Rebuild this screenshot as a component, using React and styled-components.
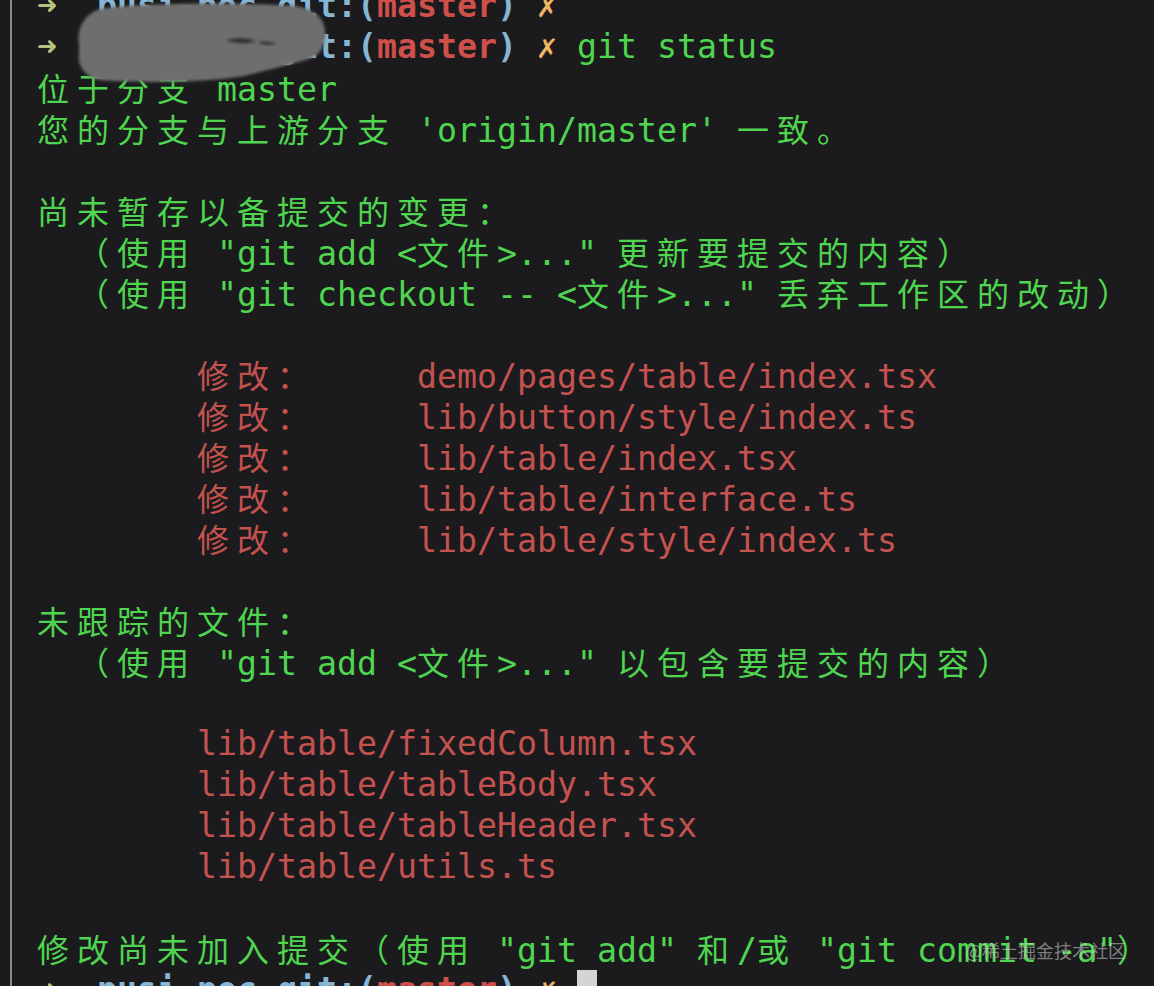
import React from "react";
import styled, { createGlobalStyle } from "styled-components";

const Global = createGlobalStyle`
  html, body { margin: 0; padding: 0; background: #1b1b1d; }
  body { overflow: hidden; }
`;

const TONES = {
  green: "#4fd54f",
  red: "#c4524f",
  blue: "#86b6d6",
  prompt: "#cf4f4b",
  cross: "#f0b564",
  arrow: "#b7c27b",
};

const Screen = styled.div`
  position: relative;
  width: 1154px;
  height: 986px;
  overflow: hidden;
  background: #1b1b1d;
  padding-left: 10px;
  box-sizing: border-box;
  display: flex;
`;

const Pane = styled.div`
  flex: 1;
  border-left: 2px solid #8a8a8a;
  padding-left: 25px;
  box-sizing: border-box;
`;

const Lines = styled.div`
  margin-top: -15px;
  font-family: "DejaVu Sans Mono", "Liberation Mono", monospace;
  font-size: 33.22px;
  -webkit-font-smoothing: antialiased;
`;

const Line = styled.div`
  height: 41px;
  line-height: 41px;
  white-space: pre;
  color: ${TONES.green};
`;

const Seg = styled.span`
  color: ${(p) => TONES[p.$tone] || TONES.green};
  font-weight: ${(p) => (p.$bold ? 700 : 400)};
`;

const Wide = styled.span`
  display: inline-block;
  width: 40px;
  font-family: "Noto Sans CJK SC", "Noto Sans CJK JP", sans-serif;
  font-size: 32px;
  font-weight: 400;
  text-align: left;
`;

const Cursor = styled.span`
  display: inline-block;
  width: 20px;
  height: 38px;
  background: #d4d4d4;
  vertical-align: top;
  margin-top: 1px;
`;

const Smudge = styled.svg`
  position: absolute;
  left: 0;
  top: 0;
  width: 340px;
  height: 90px;
  pointer-events: none;
`;

const Watermark = styled.div`
  position: absolute;
  right: 28px;
  top: 937px;
  font-family: "Noto Sans CJK SC", sans-serif;
  font-size: 18px;
  color: rgba(215, 215, 215, 0.55);
  white-space: nowrap;
`;

const WIDE_RE = /[\u2e80-\u303f\u3040-\u9fff\uf900-\ufaff\uff00-\uff60\uffe0-\uffe6]/;

function renderText(text) {
  const out = [];
  let buf = "";
  let k = 0;
  for (const ch of text) {
    if (WIDE_RE.test(ch)) {
      if (buf) {
        out.push(buf);
        buf = "";
      }
      out.push(<Wide key={k++}>{ch}</Wide>);
    } else {
      buf += ch;
    }
  }
  if (buf) out.push(buf);
  return out;
}

const prompt = (tail) => [
  ["arrow", "➜", true],
  ["blue", "  pusi-poc ", true],
  ["blue", "git:(", true],
  ["prompt", "master", true],
  ["blue", ")", true],
  ["cross", " ✗", true],
  ...(tail ? [["green", tail]] : []),
];

const TAB = "        ";
const MOD = (file) => [["red", `${TAB}修改：     ${file}`]];
const UNTRACKED = (file) => [["red", `${TAB}${file}`]];

const LINES = [
  prompt(),
  prompt(" git status"),
  [["green", "位于分支 master"]],
  [["green", "您的分支与上游分支 'origin/master' 一致。"]],
  [],
  [["green", "尚未暂存以备提交的变更："]],
  [["green", '  （使用 "git add <文件>..." 更新要提交的内容）']],
  [["green", '  （使用 "git checkout -- <文件>..." 丢弃工作区的改动）']],
  [],
  MOD("demo/pages/table/index.tsx"),
  MOD("lib/button/style/index.ts"),
  MOD("lib/table/index.tsx"),
  MOD("lib/table/interface.ts"),
  MOD("lib/table/style/index.ts"),
  [],
  [["green", "未跟踪的文件："]],
  [["green", '  （使用 "git add <文件>..." 以包含要提交的内容）']],
  [],
  UNTRACKED("lib/table/fixedColumn.tsx"),
  UNTRACKED("lib/table/tableBody.tsx"),
  UNTRACKED("lib/table/tableHeader.tsx"),
  UNTRACKED("lib/table/utils.ts"),
  [],
  [["green", '修改尚未加入提交（使用 "git add" 和/或 "git commit -a"）']],
];

export default function App() {
  return (
    <>
      <Global />
      <Screen>
        <Pane>
          <Lines>
            {LINES.map((segs, i) => (
              <Line key={i}>
                {segs.length === 0
                  ? " "
                  : segs.map(([tone, text, bold], j) => (
                      <Seg key={j} $tone={tone} $bold={bold}>
                        {renderText(text)}
                      </Seg>
                    ))}
              </Line>
            ))}
            <Line>
              {prompt().map(([tone, text, bold], j) => (
                <Seg key={j} $tone={tone} $bold={bold}>
                  {text}
                </Seg>
              ))}
              <Seg $tone="green"> </Seg>
              <Cursor />
            </Line>
          </Lines>
        </Pane>
        <Smudge viewBox="0 0 340 90" aria-hidden="true">
          <defs>
            <filter id="soft" x="-10%" y="-10%" width="120%" height="120%">
              <feGaussianBlur stdDeviation="1.5" />
            </filter>
          </defs>
          <path
            filter="url(#soft)"
            fill="#6e6e6e"
            d="M 79 44 C 76 30, 84 14, 100 9 C 140 3, 240 2, 296 6 C 318 10, 327 22, 325 37 C 324 50, 318 56, 306 60 C 284 66, 264 71, 244 76 C 204 83, 132 83, 100 80 C 84 77, 77 64, 79 54 Z"
          />
          <path
            filter="url(#soft)"
            fill="#2f2f2f"
            d="M 226 40 C 236 37, 250 38, 256 41 C 250 44, 236 44, 226 40 Z M 258 42 C 264 41, 272 42, 276 44 C 270 46, 262 45, 258 42 Z"
          />
        </Smudge>
        <Watermark>@稀土掘金技术社区</Watermark>
      </Screen>
    </>
  );
}
